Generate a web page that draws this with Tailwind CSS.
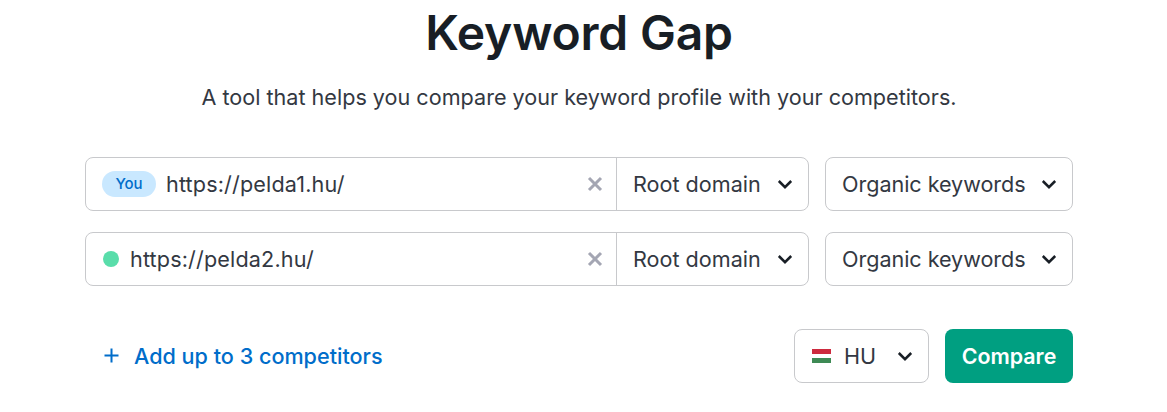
<!DOCTYPE html>
<html lang="en">
<head>
  <meta charset="UTF-8" />
  <title>Keyword Gap</title>
  <meta name="viewport" content="width=device-width, initial-scale=1" />
  <script src="https://cdn.jsdelivr.net/npm/@tailwindcss/browser@4"></script>
</head>
<body class="bg-white h-[412px] overflow-hidden font-['Inter',sans-serif] text-[#333842]">
  <div class="w-[988px] ml-[85px]">
    <h1 class="h-[64px] pt-px text-center text-[48px] leading-[64px] font-semibold tracking-[-0.2px] text-[#181e25]">Keyword Gap</h1>
    <p class="mt-[21px] text-center text-[21.6px] leading-[24px]">A tool that helps you compare your keyword profile with your competitors.</p>

    <div class="mt-[48px] flex gap-4">
      <div class="w-[724px] h-[54px] flex items-center border border-[#c8c9cc] rounded-lg">
        <span class="ml-4 w-[54px] h-[26px] flex items-center justify-center rounded-full bg-[#c9e8ff] text-[#006dca] text-[15px] font-medium">You</span>
        <span class="ml-[10px] flex-1 text-[21.6px] tracking-[0.15px]">https://pelda1.hu/</span>
        <svg class="w-4 h-4 mr-[13px]" viewBox="0 0 16 16" fill="none" stroke="#a4a6b3" stroke-width="3"><path d="M2 2l12 12M14 2L2 14" /></svg>
        <div class="w-[192px] h-full flex items-center justify-between pl-4 pr-[15px] border-l border-[#c8c9cc]">
          <span class="text-[21.6px]">Root domain</span>
          <svg class="w-4 h-4" viewBox="0 0 16 16" fill="none" stroke="#181e25" stroke-width="2.5"><path d="M1.8 5L8 11.2 14.2 5" /></svg>
        </div>
      </div>
      <div class="w-[248px] h-[54px] flex items-center justify-between pl-4 pr-[15px] border border-[#c8c9cc] rounded-lg">
        <span class="text-[21.6px] tracking-[-0.05px]">Organic keywords</span>
        <svg class="w-4 h-4" viewBox="0 0 16 16" fill="none" stroke="#181e25" stroke-width="2.5"><path d="M1.8 5L8 11.2 14.2 5" /></svg>
      </div>
    </div>

    <div class="mt-[21px] flex gap-4">
      <div class="w-[724px] h-[54px] flex items-center border border-[#c8c9cc] rounded-lg">
        <span class="ml-[17px] w-4 h-4 rounded-full bg-[#59ddaa]"></span>
        <span class="ml-[11px] flex-1 text-[21.6px] tracking-[0.15px]">https://pelda2.hu/</span>
        <svg class="w-4 h-4 mr-[13px]" viewBox="0 0 16 16" fill="none" stroke="#a4a6b3" stroke-width="3"><path d="M2 2l12 12M14 2L2 14" /></svg>
        <div class="w-[192px] h-full flex items-center justify-between pl-4 pr-[15px] border-l border-[#c8c9cc]">
          <span class="text-[21.6px]">Root domain</span>
          <svg class="w-4 h-4" viewBox="0 0 16 16" fill="none" stroke="#181e25" stroke-width="2.5"><path d="M1.8 5L8 11.2 14.2 5" /></svg>
        </div>
      </div>
      <div class="w-[248px] h-[54px] flex items-center justify-between pl-4 pr-[15px] border border-[#c8c9cc] rounded-lg">
        <span class="text-[21.6px] tracking-[-0.05px]">Organic keywords</span>
        <svg class="w-4 h-4" viewBox="0 0 16 16" fill="none" stroke="#181e25" stroke-width="2.5"><path d="M1.8 5L8 11.2 14.2 5" /></svg>
      </div>
    </div>

    <div class="mt-[43px] flex items-center">
      <div class="flex items-center text-[#006dca] ml-[19px]">
        <svg class="w-[15px] h-[15px]" viewBox="0 0 15 15" fill="none" stroke="currentColor" stroke-width="2"><path d="M7.5 .5v14M.5 7.5h14" /></svg>
        <span class="ml-[15px] text-[21.6px] font-[450]">Add up to 3 competitors</span>
      </div>
      <div class="ml-auto w-[135px] h-[54px] flex items-center border border-[#c8c9cc] rounded-lg pl-[17px]">
        <span class="w-[19px] h-[14px] flex flex-col">
          <span class="flex-1 bg-[#cd2a3e]"></span>
          <span class="flex-1 bg-white"></span>
          <span class="flex-1 bg-[#3e8a55]"></span>
        </span>
        <span class="ml-[13px] text-[21.6px]">HU</span>
        <svg class="w-4 h-4 ml-[21px]" viewBox="0 0 16 16" fill="none" stroke="#181e25" stroke-width="2.5"><path d="M1.8 5L8 11.2 14.2 5" /></svg>
      </div>
      <button class="ml-4 w-[128px] h-[54px] rounded-lg bg-[#009f81] text-white text-[21.4px] font-semibold">Compare</button>
    </div>
  </div>
</body>
</html>
